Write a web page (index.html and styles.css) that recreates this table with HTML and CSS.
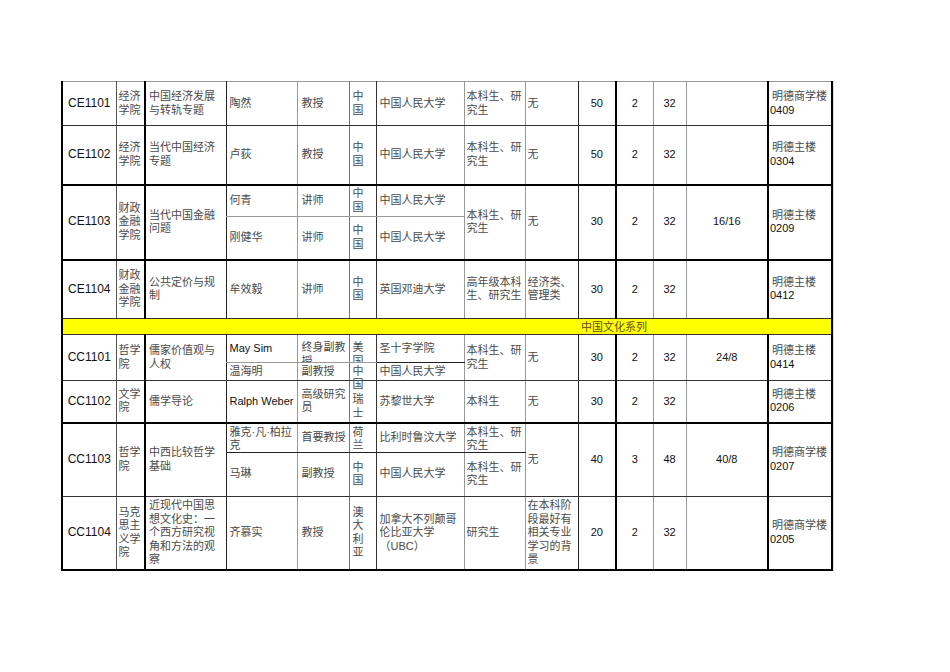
FILE: index.html
```html
<!DOCTYPE html>
<html lang="zh-CN">
<head>
<meta charset="utf-8">
<title>课程表</title>
<link rel="stylesheet" href="styles.css">
</head>
<body>
<div class="page">
<table class="sheet">
<colgroup>
<col class="c-code"><col class="c-school"><col class="c-course"><col class="c-name"><col class="c-title"><col class="c-cty"><col class="c-univ"><col class="c-stu"><col class="c-pre"><col class="c-cap"><col class="c-cred"><col class="c-hrs"><col class="c-split"><col class="c-room">
</colgroup>
<tbody>
<tr class="h44">
  <td class="code">CE1101</td>
  <td class="cjk"><div class="two">经济学院</div></td>
  <td class="cjk course">中国经济发展与转轨专题</td>
  <td class="cjk name">陶然</td>
  <td class="cjk title">教授</td>
  <td class="cjk cty"><div class="one">中国</div></td>
  <td class="cjk univ">中国人民大学</td>
  <td class="cjk stu">本科生、研究生</td>
  <td class="cjk pre">无</td>
  <td class="num">50</td>
  <td class="num">2</td>
  <td class="num">32</td>
  <td class="num"></td>
  <td class="room">明德商学楼<br><span class="lat">0409</span></td>
</tr>
<tr class="h59 thin-top">
  <td class="code">CE1102</td>
  <td class="cjk"><div class="two">经济学院</div></td>
  <td class="cjk course">当代中国经济专题</td>
  <td class="cjk name">卢荻</td>
  <td class="cjk title">教授</td>
  <td class="cjk cty"><div class="one">中国</div></td>
  <td class="cjk univ">中国人民大学</td>
  <td class="cjk stu">本科生、研究生</td>
  <td class="cjk pre">无</td>
  <td class="num">50</td>
  <td class="num">2</td>
  <td class="num">32</td>
  <td class="num"></td>
  <td class="room">明德主楼<br><span class="lat">0304</span></td>
</tr>
<tr class="h32 thick-top">
  <td class="code" rowspan="2">CE1103</td>
  <td class="cjk" rowspan="2"><div class="two">财政金融学院</div></td>
  <td class="cjk course" rowspan="2">当代中国金融问题</td>
  <td class="cjk name">何青</td>
  <td class="cjk title">讲师</td>
  <td class="cjk cty"><div class="one">中国</div></td>
  <td class="cjk univ">中国人民大学</td>
  <td class="cjk stu" rowspan="2">本科生、研究生</td>
  <td class="cjk pre" rowspan="2">无</td>
  <td class="num" rowspan="2">30</td>
  <td class="num" rowspan="2">2</td>
  <td class="num" rowspan="2">32</td>
  <td class="num" rowspan="2">16/16</td>
  <td class="room" rowspan="2">明德主楼<br><span class="lat">0209</span></td>
</tr>
<tr class="h43">
  <td class="cjk name sub-grey">刚健华</td>
  <td class="cjk title sub-grey">讲师</td>
  <td class="cjk cty sub-grey"><div class="one">中国</div></td>
  <td class="cjk univ sub-grey">中国人民大学</td>
</tr>
<tr class="h59 thick-top">
  <td class="code">CE1104</td>
  <td class="cjk"><div class="two">财政金融学院</div></td>
  <td class="cjk course">公共定价与规制</td>
  <td class="cjk name">牟效毅</td>
  <td class="cjk title">讲师</td>
  <td class="cjk cty"><div class="one">中国</div></td>
  <td class="cjk univ">英国邓迪大学</td>
  <td class="cjk stu">高年级本科生、研究生</td>
  <td class="cjk pre">经济类、管理类</td>
  <td class="num">30</td>
  <td class="num">2</td>
  <td class="num">32</td>
  <td class="num"></td>
  <td class="room">明德主楼<br><span class="lat">0412</span></td>
</tr>
<tr class="h16 band-row">
  <td class="band" colspan="14">中国文化系列</td>
</tr>
<tr class="h27 thin-top">
  <td class="code" rowspan="2">CC1101</td>
  <td class="cjk" rowspan="2"><div class="two">哲学院</div></td>
  <td class="cjk course" rowspan="2">儒家价值观与人权</td>
  <td class="name latin">May Sim</td>
  <td class="cjk title"><div class="clip27">终身副教授</div></td>
  <td class="cjk cty"><div class="clip27"><div class="one">美国</div></div></td>
  <td class="cjk univ">圣十字学院</td>
  <td class="cjk stu" rowspan="2">本科生、研究生</td>
  <td class="cjk pre" rowspan="2">无</td>
  <td class="num" rowspan="2">30</td>
  <td class="num" rowspan="2">2</td>
  <td class="num" rowspan="2">32</td>
  <td class="num" rowspan="2">24/8</td>
  <td class="room" rowspan="2">明德主楼<br><span class="lat">0414</span></td>
</tr>
<tr class="h18">
  <td class="cjk name sub-grey">温海明</td>
  <td class="cjk title sub-grey">副教授</td>
  <td class="cjk cty sub-grey spill-cell"><div class="spill"><div class="one">中国</div></div></td>
  <td class="cjk univ sub-dark">中国人民大学</td>
</tr>
<tr class="h42 thin-top">
  <td class="code">CC1102</td>
  <td class="cjk"><div class="two">文学院</div></td>
  <td class="cjk course">儒学导论</td>
  <td class="name latin">Ralph Weber</td>
  <td class="cjk title">高级研究员</td>
  <td class="cjk cty"><div class="one below-spill">瑞士</div></td>
  <td class="cjk univ">苏黎世大学</td>
  <td class="cjk stu">本科生</td>
  <td class="cjk pre">无</td>
  <td class="num">30</td>
  <td class="num">2</td>
  <td class="num">32</td>
  <td class="num"></td>
  <td class="room">明德主楼<br><span class="lat">0206</span></td>
</tr>
<tr class="h29 thick-top">
  <td class="code" rowspan="2">CC1103</td>
  <td class="cjk" rowspan="2"><div class="two">哲学院</div></td>
  <td class="cjk course" rowspan="2">中西比较哲学基础</td>
  <td class="cjk name"><div class="clip29">雅克·凡·柏拉克</div></td>
  <td class="cjk title">首要教授</td>
  <td class="cjk cty"><div class="clip29"><div class="one">荷兰</div></div></td>
  <td class="cjk univ">比利时鲁汶大学</td>
  <td class="cjk stu"><div class="clip29">本科生、研究生</div></td>
  <td class="cjk pre" rowspan="2">无</td>
  <td class="num" rowspan="2">40</td>
  <td class="num" rowspan="2">3</td>
  <td class="num" rowspan="2">48</td>
  <td class="num" rowspan="2">40/8</td>
  <td class="room" rowspan="2">明德商学楼<br><span class="lat">0207</span></td>
</tr>
<tr class="h44">
  <td class="cjk name sub-dark">马琳</td>
  <td class="cjk title sub-dark">副教授</td>
  <td class="cjk cty sub-dark"><div class="one">中国</div></td>
  <td class="cjk univ sub-dark">中国人民大学</td>
  <td class="cjk stu sub-dark">本科生、研究生</td>
</tr>
<tr class="h74 thin-top">
  <td class="code">CC1104</td>
  <td class="cjk"><div class="two">马克思主义学院</div></td>
  <td class="cjk course">近现代中国思想文化史：一个西方研究视角和方法的观察</td>
  <td class="cjk name">齐慕实</td>
  <td class="cjk title">教授</td>
  <td class="cjk cty"><div class="one">澳大利亚</div></td>
  <td class="cjk univ">加拿大不列颠哥伦比亚大学（UBC）</td>
  <td class="cjk stu">研究生</td>
  <td class="cjk pre">在本科阶段最好有相关专业学习的背景</td>
  <td class="num">20</td>
  <td class="num">2</td>
  <td class="num">32</td>
  <td class="num"></td>
  <td class="room">明德商学楼<br><span class="lat">0205</span></td>
</tr>
</tbody>
</table>
</div>
</body>
</html>
```

FILE: styles.css
```css
html, body {
  margin: 0;
  padding: 0;
  background: #fff;
}

body {
  width: 950px;
  height: 672px;
  overflow: hidden;
}

.page {
  padding: 81px 0 0 61px;
}

.sheet {
  border-collapse: collapse;
  table-layout: fixed;
  width: 771px;
  font-family: "Liberation Sans", "Noto Sans CJK SC", sans-serif;
  font-size: 11px;
  line-height: 13.5px;
  color: #000;
  border-top: 1px solid #9a9a9a;
  border-left: 2px solid #000;
  border-right: 2px solid #000;
  border-bottom: 2px solid #000;
  box-shadow: 1px 0 0 #e4e4a8;
}

/* column widths and vertical rules */
.c-code   { width: 54px; }
.c-school { width: 29px; border-left: 1px solid #555; }
.c-course { width: 81px; border-left: 2px solid #000; }
.c-name   { width: 71px; border-left: 1px solid #222; }
.c-title  { width: 52px; border-left: 1px solid #999; }
.c-cty    { width: 27px; border-left: 1px solid #777; }
.c-univ   { width: 88px; border-left: 1px solid #333; }
.c-stu    { width: 61px; border-left: 1px solid #999; }
.c-pre    { width: 53px; border-left: 1px solid #999; }
.c-cap    { width: 38px; border-left: 1px solid #222; }
.c-cred   { width: 37px; border-left: 2px solid #000; }
.c-hrs    { width: 33px; border-left: 1px solid #999; }
.c-split  { width: 82px; border-left: 1px solid #999; }
.c-room   { width: 64px; border-left: 2px solid #000; }

td {
  border: none;
  padding: 0 2px 0 2px;
  vertical-align: middle;
  overflow: hidden;
  white-space: normal;
}

/* row heights */
.h16 { height: 16px; }
.h18 { height: 18px; }
.h27 { height: 27px; }
.h29 { height: 29px; }
.h32 { height: 32px; }
.h42 { height: 42px; }
.h43 { height: 43px; }
.h44 { height: 44px; }
.h59 { height: 59px; }
.h74 { height: 74px; }

/* horizontal rules */
.thin-top { border-top: 1px solid #333; }
.thick-top { border-top: 2px solid #000; }
.sub-grey { border-top: 1px solid #9a9a9a; }
.sub-dark { border-top: 1px solid #222; }

/* cell kinds */
.code {
  text-align: center;
  font-size: 12px;
  color: #111;
}

.num {
  text-align: center;
  font-size: 11px;
  color: #111;
}

.cjk {
  color: #4a4a4a;
}

.latin {
  font-size: 11px;
  color: #111;
  padding-left: 3px;
}

.course { padding-left: 3px; padding-right: 8px; }
.name   { padding-left: 3px; }
.title  { padding-left: 4px; }
.cty    { padding-left: 3px; padding-right: 1px; }
.univ   { padding-left: 3px; }
.stu    { padding-left: 2px; padding-right: 1px; }
.pre    { padding-left: 2px; }

.room {
  padding-left: 3px;
  padding-right: 1px;
  color: #4a4a4a;
}

.room .lat {
  color: #111;
  margin-left: -2px;
}

.two { width: 23px; }
.one { width: 12px; }

.clip27 {
  height: 27px;
  padding-top: 6px;
  box-sizing: border-box;
  overflow: hidden;
}

.clip29 {
  height: 28px;
  padding-top: 2px;
  box-sizing: border-box;
  overflow: hidden;
}

.spill-cell {
  overflow: visible;
}

.spill {
  height: 14px;
  overflow: visible;
}

.below-spill {
  padding-top: 11px;
}

.band-row { border-top: 1px solid #333; }

.band {
  background: #ffff00;
  color: #5a5028;
  padding: 0 0 0 518px;
  text-align: left;
  border-top: 1px solid #333;
  border-bottom: 1px solid #333;
  line-height: 14px;
}
```
